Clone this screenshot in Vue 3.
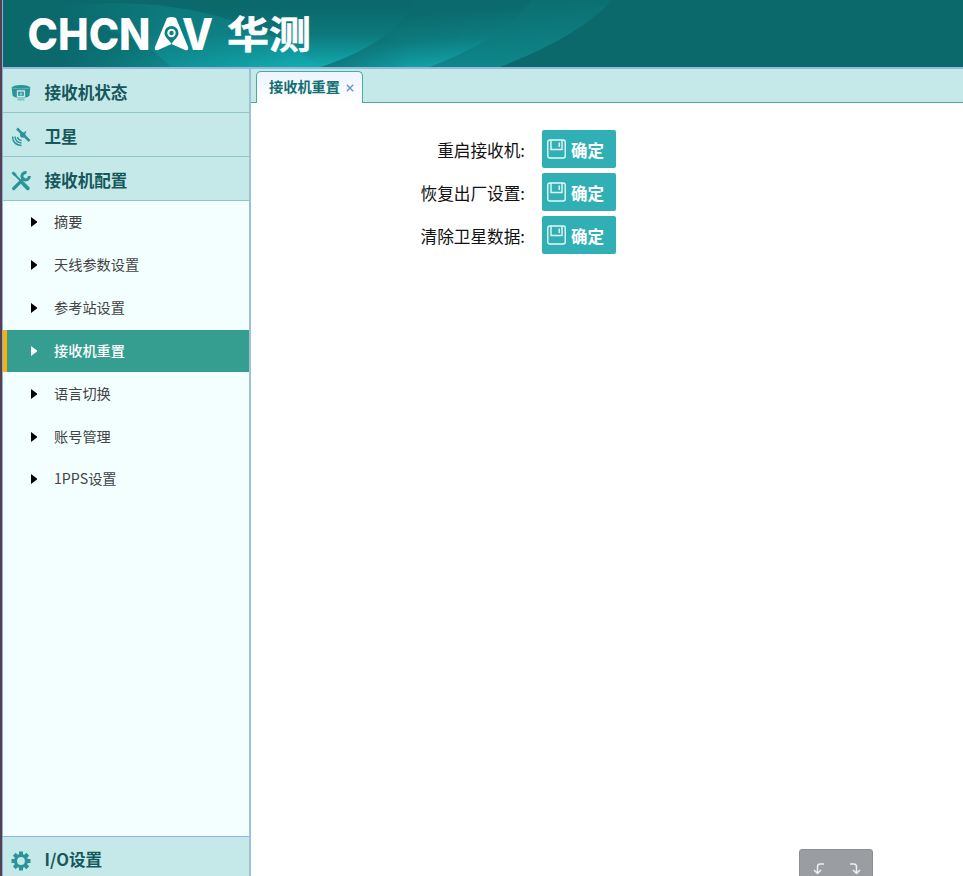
<script setup>
const top = [
  { icon: 'receiver', label: '接收机状态' },
  { icon: 'satellite', label: '卫星' },
  { icon: 'tools', label: '接收机配置' },
]
const items = ['摘要', '天线参数设置', '参考站设置', '接收机重置', '语言切换', '账号管理', '1PPS设置']
const current = '接收机重置'
const actions = ['重启接收机:', '恢复出厂设置:', '清除卫星数据:']
</script>

<template>
  <div class="shell">
    <div class="edge"></div>
    <div class="app">
      <header class="header">
        <svg width="960" height="67" viewBox="3 0 960 67">
          <defs>
            <linearGradient id="g1" x1="0" y1="0" x2="0" y2="1">
              <stop offset="0.1" stop-color="#14b4b9" stop-opacity="0" />
              <stop offset="0.5" stop-color="#14b4b9" stop-opacity="0.2" />
              <stop offset="1" stop-color="#14b4b9" stop-opacity="0.85" />
            </linearGradient>
            <linearGradient id="g2" gradientUnits="userSpaceOnUse" x1="425" y1="0" x2="430" y2="67">
              <stop offset="0.2" stop-color="#14b4b9" stop-opacity="0.03" />
              <stop offset="0.6" stop-color="#14b4b9" stop-opacity="0.25" />
              <stop offset="1" stop-color="#14b4b9" stop-opacity="0.75" />
            </linearGradient>
            <linearGradient id="g3" gradientUnits="userSpaceOnUse" x1="530" y1="0" x2="533" y2="67">
              <stop offset="0" stop-color="#14b4b9" stop-opacity="0.06" />
              <stop offset="1" stop-color="#14b4b9" stop-opacity="0.4" />
            </linearGradient>
            <linearGradient id="g4" gradientUnits="userSpaceOnUse" x1="60" y1="0" x2="240" y2="0">
              <stop offset="0" stop-color="#14b4b9" stop-opacity="0" />
              <stop offset="0.6" stop-color="#14b4b9" stop-opacity="0.22" />
              <stop offset="1" stop-color="#14b4b9" stop-opacity="0.2" />
            </linearGradient>
            <linearGradient id="fade" x1="0" y1="0" x2="1" y2="0">
              <stop offset="0" stop-color="#fff" stop-opacity="0" />
              <stop offset="1" stop-color="#fff" />
            </linearGradient>
            <mask id="m1"><rect x="60" y="0" width="230" height="67" fill="url(#fade)" /><rect x="290" y="0" width="350" height="67" fill="#fff" /></mask>
            <mask id="m2"><rect x="270" y="0" width="140" height="67" fill="url(#fade)" /><rect x="410" y="0" width="300" height="67" fill="#fff" /></mask>
          </defs>
          <path d="M20 15Q110-8 205 13Q270 28 321 67H170Q150 42 100 28Q60 20 20 15Z" fill="url(#g4)" />
          <path d="M0 0H415Q396 42 321 67H0Z" fill="url(#g1)" mask="url(#m1)" />
          <path d="M415 0H531Q508 37 430 67H321Q396 42 415 0Z" fill="url(#g2)" mask="url(#m2)" />
          <path d="M531 0H612Q580 36 500 67H430Q508 37 531 0Z" fill="url(#g3)" />
          <g fill="#fff">
            <text x="27.500" y="50" class="brand" textLength="123" lengthAdjust="spacingAndGlyphs">CHCN</text>
            <path fill-rule="evenodd" d="M167 18Q171.500 16 176 18L188 47Q189 51 185 50L171.500 44L158 50Q154 51 155 47ZM171.500 26a7 7 0 0 0-7 7c0 4 4 6 7 11c3-5 7-7 7-11a7 7 0 0 0-7-7Z" />
            <circle cx="171.500" cy="33" r="3.200" fill="none" stroke="#fff" stroke-width="2" />
            <text x="182" y="50" class="brand" textLength="31" lengthAdjust="spacingAndGlyphs">V</text>
            <text x="227" y="47.500" class="brand-cn" textLength="84" lengthAdjust="spacingAndGlyphs">华测</text>
          </g>
        </svg>
      </header>
      <div class="body">
        <nav class="side">
          <div v-for="t in top" :key="t.label" class="group">
            <svg v-if="t.icon === 'receiver'" class="gicon" viewBox="0 0 20 20">
              <path d="M.7 4.500Q2 2 10 2T19.300 4.500L18.500 12.500Q17 14.500 14.500 14.500H5.500Q3 14.500 1.500 12.500Z" fill="#2b9497" />
              <path d="M1.500 5.200Q10 6.800 18.500 5.200" fill="none" stroke="#8bcbcc" stroke-width=".6" />
              <path d="M6.500 8H13.500V13.500H6.500Z" fill="#2b9497" stroke="#c5e8e8" stroke-width="1.300" />
              <path d="M8.700 9.700H11.300V12H8.700Z" fill="#8bcbcc" /><path d="M6.500 15.300H13.500V17.500H6.500Z" fill="#7fc2c4" />
            </svg>
            <svg v-else-if="t.icon === 'satellite'" class="gicon" viewBox="0 0 20 20" fill="none" stroke="#2b9497">
              <path d="M6 1.500L11 6.500M13 8.500L18.500 14" stroke-width="2.500" /><circle cx="11.800" cy="8" r="2.800" fill="#2b9497" stroke="none" /><path d="M12 7.500L15 4.500" stroke-width="1.500" />
              <path d="M1.500 9.500Q2 18 10.500 18.500M4 9.500Q4.500 15.500 10.500 16M6.500 10Q7 13 10.500 13.500" stroke-width="1.500" />
            </svg>
            <svg v-else class="gicon" viewBox="0 0 20 20" fill="none" stroke="#2b9497">
              <path d="M4 4L11 11" stroke-width="1.800" /><path d="M.5 2L2.500.5L5.500 3L5 5L3 5Z" fill="#2b9497" stroke="none" />
              <path d="M12 12.500L16.800 17.300" stroke-width="3.800" stroke-linecap="round" />
              <path d="M2.700 17.500L12.500 7.800" stroke-width="3.200" stroke-linecap="round" />
              <path d="M15.500 1.700A3.700 3.700 0 1 0 18.300 5" stroke-width="3" />
            </svg>
            <span>{{ t.label }}</span>
          </div>
          <div class="items">
            <div v-for="i in items" :key="i" class="item" :class="{ active: i === current }">
              <svg class="tri" viewBox="0 0 6 10"><path d="M0 0L6 4.500V5.500L0 10Z" fill="currentColor" /></svg>
              <span>{{ i }}</span>
            </div>
          </div>
          <div class="group last">
            <svg class="gicon" viewBox="-10 -10 20 20" fill="none" stroke="#2b9497">
              <circle r="5.500" stroke-width="3.200" />
              <path v-for="a in [0, 45, 90, 135]" :key="a" d="M0-9.500V-6M0 9.500V6" stroke-width="4" :transform="`rotate(${a})`" />
            </svg>
            <span>I/O设置</span>
          </div>
        </nav>
        <main class="main">
          <div class="tabs">
            <div class="tab"><span>接收机重置</span><svg viewBox="0 0 8 8"><path d="M.8.8L7.200 7.200M7.200.8L.8 7.200" stroke="#6c8ec8" stroke-width="1.300" /></svg></div>
          </div>
          <div class="form">
            <div v-for="a in actions" :key="a" class="row">
              <label>{{ a }}</label>
              <button>
                <svg viewBox="0 0 19 20" fill="none" stroke="#e6f8f8" stroke-width="1.400"><rect x=".8" y="1" width="17.400" height="18" rx="2" /><path d="M4 1V10.500H15V1M12.200 3.500V8" /></svg>
                <span>确定</span>
              </button>
            </div>
          </div>
        </main>
      </div>
    </div>
    <div class="float">
      <svg viewBox="0 0 12 13"><path d="M11 2H7Q4.500 2 4.500 5V11M1 8L4.500 11.500L8 8" /></svg>
      <svg viewBox="0 0 12 13"><path d="M1 2H5Q7.500 2 7.500 5V11M4 8L7.500 11.500L11 8" /></svg>
    </div>
  </div>
</template>

<style>
body { margin: 0; overflow: hidden; }
</style>

<style scoped>
.shell { position: relative; display: flex; width: 963px; height: 876px; overflow: hidden; background: #fff; font-family: "Noto Sans CJK SC", sans-serif; }
.shell * { box-sizing: border-box; }
.edge { width: 3px; flex: none; background: #51424e; border-right: 1px solid #91aadf; }
.app { flex: 1; display: flex; flex-direction: column; min-width: 0; }
.header { height: 69px; flex: none; background: #0b696c; border-bottom: 2px solid #94bbdc; }
.header svg { display: block; }
.brand { font: 800 44.500px Inter, sans-serif; }
.brand-cn { font: 700 38px "Noto Sans CJK SC", sans-serif; stroke: #fff; stroke-width: .5px; }
.body { flex: 1; display: flex; min-height: 0; }
.side { width: 248px; flex: none; display: flex; flex-direction: column; background: #f3ffff; border-right: 2px solid #9bc3d3; }
.group { height: 44px; flex: none; display: flex; align-items: center; gap: 13.500px; padding: 2px 0 0 8px; background: #c5e8e8; border-bottom: 1px solid #91c6c9; color: #15585b; font-size: 16.600px; font-weight: 700; }
.group span { line-height: 24px; }
.gicon { width: 20px; height: 20px; flex: none; }
.group .gicon { margin-top: 3px; }
.items { flex: 1; }
.item { height: 42.850px; display: flex; align-items: center; padding-left: 28px; gap: 17px; color: #444; font-size: 14.200px; line-height: 20px; border-left: 0 solid #fdb100; }
.item span { padding-bottom: 2px; }
.tri { width: 6px; height: 10px; color: #000; }
.item.active { background: #369d91; color: #fff; border-left-width: 4px; padding-left: 24px; font-weight: 500; }
.item.active .tri { color: #fff; }
.group.last { border-top: 1px solid #91b2e5; border-bottom: 0; height: 40px; align-items: flex-start; padding-top: 10px; }
.group.last .gicon { margin-top: 4px; }
.main { flex: 1; min-width: 0; }
.tabs { height: 34px; display: flex; align-items: flex-end; padding-left: 5px; background: #c5e8e8; border-bottom: 1px solid #4ba99e; }
.tab { height: 32px; width: 107px; margin-bottom: -1px; display: flex; align-items: center; gap: 6px; padding-left: 12px; border: 1px solid #4ba99e; border-bottom: 0; border-radius: 5px 5px 0 0; background: linear-gradient(#edf4ff, #fff); color: #126f70; font-size: 14.200px; line-height: 20px; font-weight: 700; }
.tab span { padding-bottom: 3px; }
.tab svg { width: 8px; height: 8px; }
.form { display: flex; flex-direction: column; gap: 5px; padding-top: 27px; }
.row { display: flex; height: 38px; align-items: center; }
label { width: 274px; margin-right: 17px; text-align: right; font-size: 16.650px; line-height: 24px; color: #111; padding-top: 1px; }
button { width: 74px; height: 38px; display: flex; align-items: center; gap: 5px; padding: 0 0 0 5px; border: 0; border-radius: 2px; background: #30b0b5; color: #fff; font: 700 16.500px/24px "Noto Sans CJK SC", sans-serif; }
button span { padding-top: 1px; }
button svg { width: 19px; height: 20px; }
.float { position: absolute; left: 799px; top: 849px; width: 74px; height: 40px; display: flex; gap: 24px; padding: 12px 0 0 13px; border: 1px solid #8b8f94; border-radius: 3px; background: #9a9da2; }
.float svg { width: 12px; height: 13px; fill: none; stroke: #eef0f2; stroke-width: 1.500; }
</style>
